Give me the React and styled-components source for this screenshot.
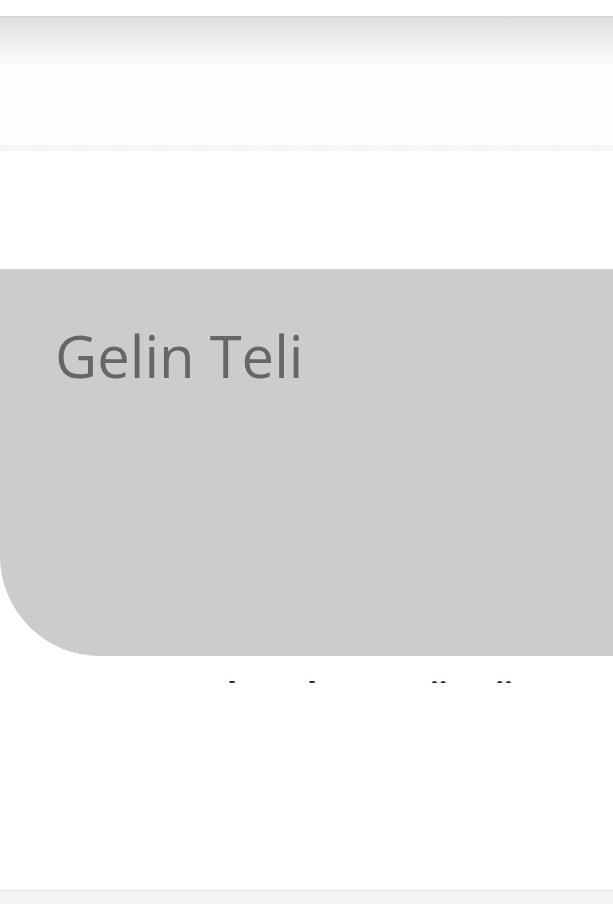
import React from 'react'
import styled, { createGlobalStyle } from 'styled-components'

const GlobalStyle = createGlobalStyle`
  html, body {
    margin: 0;
    padding: 0;
    background: #ffffff;
    font-family: "Open Sans", "Liberation Sans", sans-serif;
  }
`

const Page = styled.div`
  width: 613px;
  height: 920px;
  overflow: hidden;
  display: flex;
  flex-direction: column;
  background: #ffffff;
`

const TopBar = styled.div`
  margin-top: 16px;
  height: 50px;
  border-top: 1px solid #d6d6d6;
  background: linear-gradient(to bottom, #dedede 0%, #ededed 45%, #fafafa 85%, #fdfdfd 100%);
`

const NavArea = styled.div`
  height: 78px;
  background: #fdfdfd;
`

const NavShadow = styled.div`
  height: 6px;
  background: repeating-linear-gradient(to right, #f5f5f5 0px, #f8f8f8 20px, #f5f5f5 40px);
`

const Spacer = styled.div`
  height: ${p => p.h}px;
  flex-shrink: 0;
`

const Hero = styled.section`
  height: 387px;
  box-sizing: border-box;
  padding: 58px 56px 56px 55px;
  background: #cccccc;
  border-bottom-left-radius: 100px;
`

const HeroTitle = styled.h1`
  margin: 0;
  font-family: "Open Sans", sans-serif;
  font-weight: 400;
  font-size: 58px;
  line-height: 1;
  color: #666666;
`

const ClippedRow = styled.div`
  margin-top: 18px;
  height: 9px;
  overflow: hidden;
  padding-left: 38px;
  white-space: nowrap;
`

const RowText = styled.h2`
  margin: 1px 0 0 0;
  font-family: "Open Sans", sans-serif;
  font-weight: 600;
  font-size: 45px;
  line-height: 1;
  color: #333333;
`

const Footer = styled.footer`
  margin-top: auto;
  margin-bottom: 16px;
  height: 13px;
  border-top: 1px solid #e2e2e2;
  background: #f4f4f4;
`

const App = () => (
  <Page>
    <GlobalStyle />
    <TopBar />
    <NavArea />
    <NavShadow />
    <Spacer h={118} />
    <Hero>
      <HeroTitle>Gelin Teli</HeroTitle>
    </Hero>
    <ClippedRow>
      <RowText>Tamamı kaplama örtü</RowText>
    </ClippedRow>
    <Footer />
  </Page>
)

export default App
